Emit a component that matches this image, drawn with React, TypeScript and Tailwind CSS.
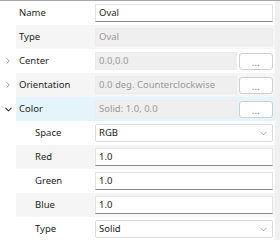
import { ChevronDown, ChevronRight } from 'lucide-react';

type Row = {
  label: string;
  indent?: boolean;
  expand?: 'open' | 'closed';
  kind: 'input' | 'readonly' | 'ellipsis' | 'select';
  value: string;
  bg: string;
};

const rows: Row[] = [
  { label: 'Name', kind: 'input', value: 'Oval', bg: 'bg-white' },
  { label: 'Type', kind: 'readonly', value: 'Oval', bg: 'bg-[#f5f5f5]' },
  { label: 'Center', expand: 'closed', kind: 'ellipsis', value: '0.0,0.0', bg: 'bg-white' },
  { label: 'Orientation', expand: 'closed', kind: 'ellipsis', value: '0.0 deg. Counterclockwise', bg: 'bg-[#f5f5f5]' },
  { label: 'Color', expand: 'open', kind: 'ellipsis', value: 'Solid: 1.0, 0.0', bg: 'bg-[#e5f3fb]' },
  { label: 'Space', indent: true, kind: 'select', value: 'RGB', bg: 'bg-white' },
  { label: 'Red', indent: true, kind: 'input', value: '1.0', bg: 'bg-[#f5f5f5]' },
  { label: 'Green', indent: true, kind: 'input', value: '1.0', bg: 'bg-white' },
  { label: 'Blue', indent: true, kind: 'input', value: '1.0', bg: 'bg-[#f5f5f5]' },
  { label: 'Type', indent: true, kind: 'select', value: 'Solid', bg: 'bg-white' },
];

function Value({ row }: { row: Row }) {
  if (row.kind === 'input') {
    return (
      <div className="flex-1 h-[18px] bg-white border border-[#e3e3e3] border-b-[#8a8a8a] flex items-center px-[3px] text-[#1a1a1a]">
        {row.value}
      </div>
    );
  }
  if (row.kind === 'readonly') {
    return (
      <div className="flex-1 h-[18px] bg-[#efefef] border border-[#ececec] flex items-center px-[3px] text-[#9a9a9a]">
        {row.value}
      </div>
    );
  }
  if (row.kind === 'select') {
    return (
      <div className="flex-1 h-[18px] bg-white border border-[#dcdcdc] rounded-[2px] flex items-center justify-between pl-[3px] pr-[3px] text-[#1a1a1a]">
        <span>{row.value}</span>
        <ChevronDown size={11} strokeWidth={1.5} className="text-[#7a7a7a]" />
      </div>
    );
  }
  return (
    <div className="flex-1 flex items-center gap-[2px]">
      <div className="flex-1 h-[18px] bg-[#efefef] border border-[#ececec] flex items-center px-[3px] text-[#9a9a9a] overflow-hidden whitespace-nowrap">
        {row.value}
      </div>
      <div className="w-[34px] h-[17px] bg-white border border-[#cfcfcf] rounded-[3px] flex items-end justify-center pb-[2px]">
        <span className="text-[8px] leading-[8px] text-[#4a5a80] tracking-[0.5px]">...</span>
      </div>
    </div>
  );
}

export default function App() {
  return (
    <div
      className="w-[280px] h-[240px] bg-white overflow-hidden border-t border-[#a8a8a8] flex"
      style={{ fontFamily: '"Noto Sans", "Open Sans", sans-serif' }}
    >
      <div className="flex-1 flex flex-col text-[9.5px]">
        {rows.map((row, i) => (
          <div key={i} className={`h-6 shrink-0 flex items-center ${row.bg}`}>
            <div className="w-[16px] h-full flex items-center justify-center bg-white">
              {row.expand === 'closed' && (
                <ChevronRight size={10} strokeWidth={1.5} className="text-[#666]" />
              )}
              {row.expand === 'open' && (
                <ChevronDown size={11} strokeWidth={2.25} className="text-[#333]" />
              )}
            </div>
            <div className={`w-[79px] text-[#1e1e1e] ${row.indent ? 'pl-[19px]' : 'pl-[3px]'}`}>
              {row.label}
            </div>
            <div className="flex-1 flex pr-[2px]">
              <Value row={row} />
            </div>
          </div>
        ))}
      </div>
      <div className="w-[5px] bg-[#f0f0f0]" />
    </div>
  );
}
